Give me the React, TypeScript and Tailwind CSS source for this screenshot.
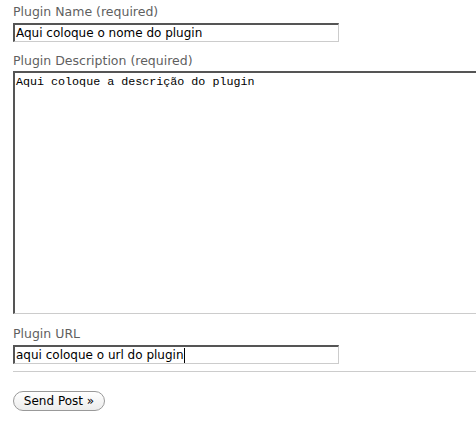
export default function App() {
  return (
    <div className="w-[476px] h-[426px] bg-white overflow-hidden" style={{ fontFamily: '"DejaVu Sans", Verdana, sans-serif' }}>
      <div className="pl-[13px] pt-[4px]">
        <div className="text-[12.5px] leading-[16px] text-[#5f5f5f]">Plugin Name (required)</div>
        <div className="mt-[3px] w-[326px] h-[19px] border-t-2 border-l-2 border-t-[#555] border-l-[#555] border-r border-b border-r-[#ccc] border-b-[#ccc] pl-[1px] text-[12px] leading-[16px] text-black">
          Aqui coloque o nome do plugin
        </div>
        <div className="mt-[11px] text-[12.5px] leading-[16px] text-[#5f5f5f]">Plugin Description (required)</div>
        <div className="mt-[2px] h-[243px] border-t-2 border-l-2 border-t-[#555] border-l-[#555] border-b border-b-[#ccc] pl-[1px] pt-[2px] text-[11.7px] leading-[14px] text-black" style={{ fontFamily: '"Liberation Mono", monospace' }}>
          Aqui coloque a descrição do plugin
        </div>
        <div className="mt-[12px] text-[12.5px] leading-[16px] text-[#5f5f5f]">Plugin URL</div>
        <div className="mt-[3px] w-[326px] h-[19px] border-t-2 border-l-2 border-t-[#555] border-l-[#555] border-r border-b border-r-[#ccc] border-b-[#ccc] pl-[1px] text-[12px] leading-[16px] text-black flex items-center">
          <span>aqui coloque o url do plugin</span>
          <span className="w-px h-[15px] bg-black"></span>
        </div>
        <div className="mt-[7px] border-t border-[#ccc]"></div>
        <button className="mt-[19px] w-[92px] h-[20px] rounded-full border border-[#999] bg-gradient-to-b from-white to-[#ececec] text-[12px] leading-[16px] text-black">
          Send Post »
        </button>
      </div>
    </div>
  );
}
